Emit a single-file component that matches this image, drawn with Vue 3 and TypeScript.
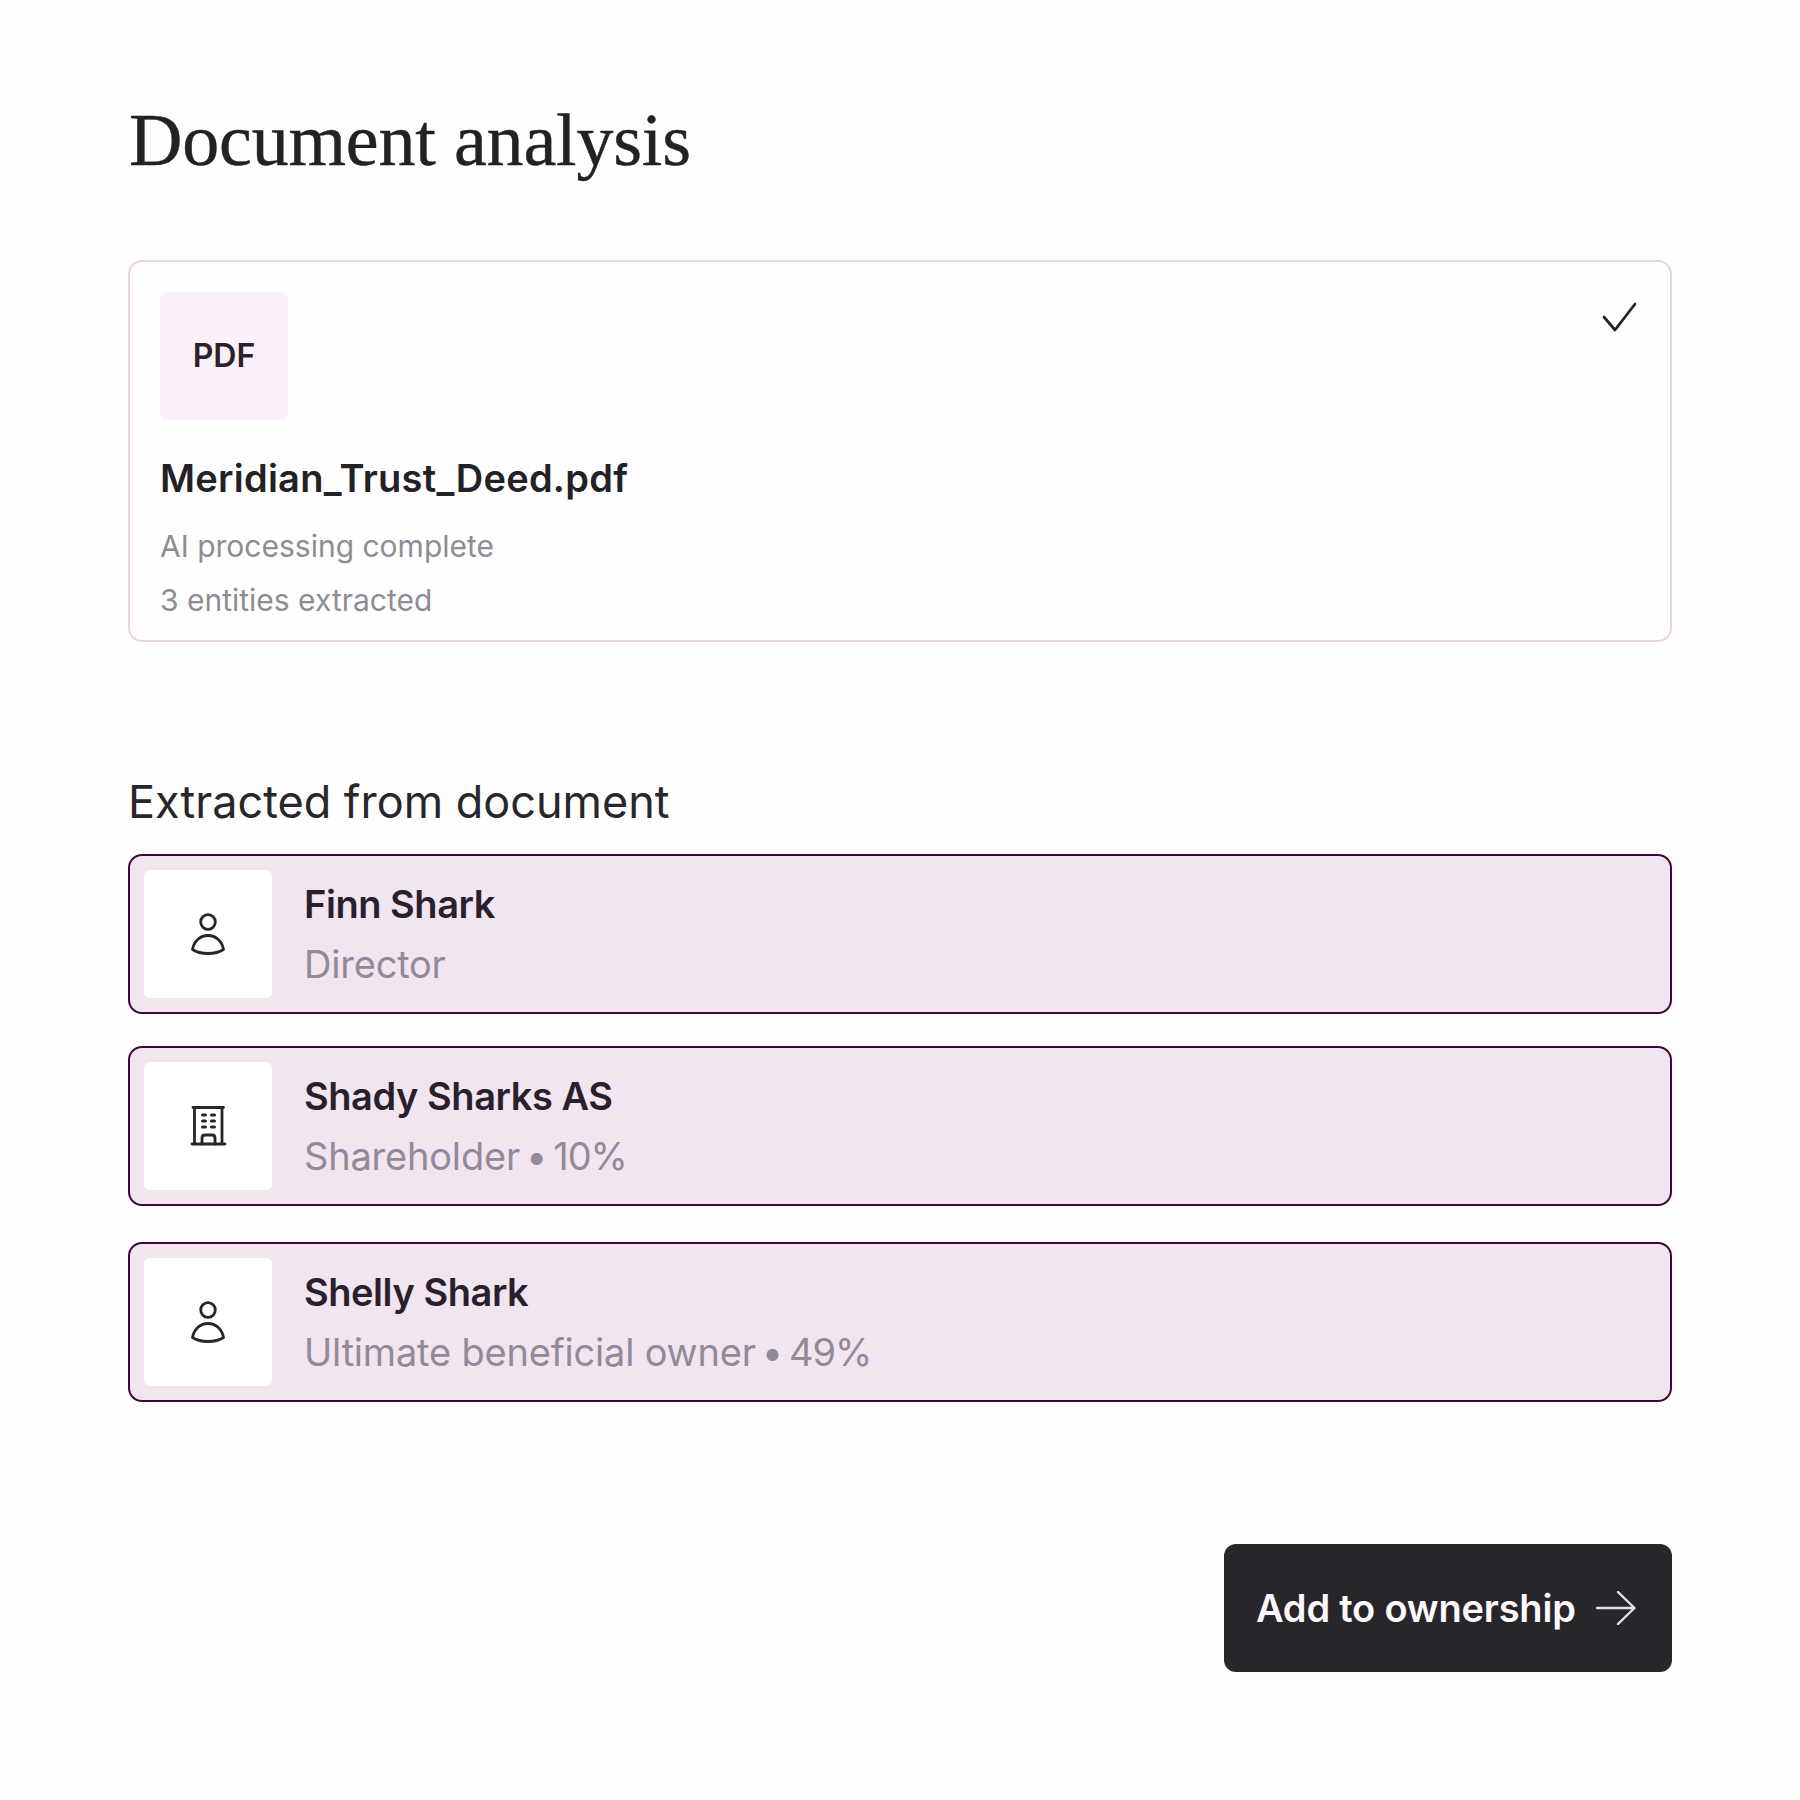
<script setup lang="ts">
interface Entity { name: string; role: string; share?: string; kind: 'person' | 'company'; }
const entities: Entity[] = [
  { name: 'Finn Shark', role: 'Director', kind: 'person' },
  { name: 'Shady Sharks AS', role: 'Shareholder', share: '10%', kind: 'company' },
  { name: 'Shelly Shark', role: 'Ultimate beneficial owner', share: '49%', kind: 'person' },
];
</script>

<template>
  <main class="page">
    <h1 class="title">Document analysis</h1>

    <section class="doc-card">
      <div class="doc-top">
        <div class="pdf">PDF</div>
        <svg class="check" width="36" height="32" viewBox="0 0 36 32" fill="none">
          <path d="M2 15 L13 28 L33 2" stroke="#25232a" stroke-width="2.8" stroke-linecap="round" stroke-linejoin="round" />
        </svg>
      </div>
      <div class="file">Meridian_Trust_Deed.pdf</div>
      <div class="meta first">AI processing complete</div>
      <div class="meta">3 entities extracted</div>
    </section>

    <h2 class="subtitle">Extracted from document</h2>

    <section class="list">
      <article v-for="e in entities" :key="e.name" class="row">
        <div class="icon-box">
          <svg v-if="e.kind === 'person'" width="48" height="48" viewBox="0 0 48 48" fill="none" stroke="#28252b" stroke-width="2.8" stroke-linejoin="round">
            <circle cx="24" cy="12" r="7.3" />
            <path d="M8.5 39.5 C10 31 16.5 25.5 24 25.5 C31.5 25.5 38 31 39.5 39.5 C35 42.5 29.5 43.5 24 43.5 C18.5 43.5 13 42.5 8.5 39.5 Z" />
          </svg>
          <svg v-else width="48" height="48" viewBox="0 0 48 48" fill="none" stroke="#28252b" stroke-width="2.8" stroke-linecap="round">
            <path d="M9 5.5 H39.5 M8 42 H41 M10.5 5.5 V42 M38 5.5 V42" />
            <path d="M18 42 V36 Q18 33 21 33 H28 Q31 33 31 36 V42" />
            <path d="M18.5 13 H21.5 M27.500 13 H30.500 M18.5 19 H21.5 M27.500 19 H30.500 M18.5 25 H21.5 M27.500 25 H30.500" stroke-width="3" />
          </svg>
        </div>
        <div class="row-text">
          <div class="name">{{ e.name }}</div>
          <div class="role">{{ e.role }}<span v-if="e.share" class="dot">{{ ' • ' }}</span><span v-if="e.share" class="share">{{ e.share }}</span></div>
        </div>
      </article>
    </section>

    <footer class="actions">
      <button class="cta" type="button">
        <span>Add to ownership</span>
        <svg width="40" height="34" viewBox="0 0 40 34" fill="none" stroke="#e6e3e6" stroke-width="2.4" stroke-linecap="round" stroke-linejoin="round">
          <path d="M1 17 H38 M22 1 L38.500 17 L22 33" />
        </svg>
      </button>
    </footer>
  </main>
</template>

<style>
html, body { margin: 0; background: #fefefe; }
</style>

<style scoped>
.page {
  width: 1800px;
  height: 1800px;
  box-sizing: border-box;
  padding: 96px 128px 0;
  font-family: Inter, "Liberation Sans", sans-serif;
  color: #2a2029;
}
.title {
  margin: 0 0 0 1px;
  font-family: "Liberation Serif", serif;
  font-weight: 400;
  font-size: 74px;
  line-height: 88px;
  color: #222126;
  letter-spacing: -0.2px;
  -webkit-text-stroke: 0.4px #222126;
}
.doc-card {
  margin-top: 76px;
  height: 382px;
  box-sizing: border-box;
  border: 2px solid #e8d3e6;
  border-radius: 14px;
  padding: 30px 30px 0;
}
.doc-top { display: flex; justify-content: space-between; align-items: flex-start; }
.pdf {
  width: 128px;
  height: 128px;
  box-sizing: border-box;
  padding-bottom: 2px;
  border-radius: 6px;
  background: #faf0f9;
  display: flex;
  align-items: center;
  justify-content: center;
  font-size: 32px;
  font-weight: 600;
}
.check { margin: 10px 2px 0 0; }
.file {
  margin-top: 35px;
  font-size: 38px;
  line-height: 46px;
  font-weight: 600;
  letter-spacing: 0.25px;
  color: #222126;
}
.meta {
  font-size: 30px;
  line-height: 54px;
  color: #8f8c93;
}
.meta.first { margin-top: 18px; }
.subtitle {
  margin: 132px 0 0;
  font-size: 45px;
  line-height: 56px;
  font-weight: 400;
  color: #28262b;
}
.list { margin-top: 24px; display: flex; flex-direction: column; }
.row {
  height: 160px;
  box-sizing: border-box;
  border: 2px solid #42063f;
  border-radius: 14px;
  background: #f1e5ef;
  padding: 14px;
  display: flex;
  align-items: center;
  gap: 32px;
}
.row + .row { margin-top: 32px; }
.row:last-child { margin-top: 36px; }
.icon-box {
  width: 128px;
  height: 128px;
  border-radius: 6px;
  background: #fff;
  display: flex;
  align-items: center;
  justify-content: center;
  flex: none;
}
.name {
  font-size: 38px;
  line-height: 46px;
  font-weight: 600;
  letter-spacing: -0.45px;
  color: #2a1f2d;
}
.role {
  margin-top: 14px;
  font-size: 38px;
  line-height: 46px;
  letter-spacing: -0.2px;
  color: #938a97;
}
.dot { word-spacing: -4.5px; white-space: pre; }
.share { letter-spacing: -1px; }
.actions { margin-top: 142px; display: flex; justify-content: flex-end; }
.cta {
  width: 448px;
  height: 128px;
  box-sizing: border-box;
  border: 0;
  border-radius: 12px;
  background: #28262b;
  color: #fbf9fb;
  font: 600 38px Inter, "Liberation Sans", sans-serif;
  letter-spacing: -0.2px;
  display: flex;
  align-items: center;
  justify-content: space-between;
  padding: 0 36px 0 32px;
}
</style>
